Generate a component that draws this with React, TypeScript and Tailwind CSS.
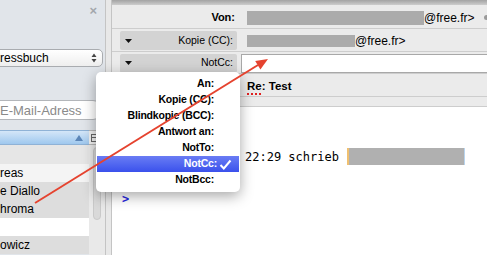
const menuItems = [
  "An:",
  "Kopie (CC):",
  "Blindkopie (BCC):",
  "Antwort an:",
  "NotTo:",
  "NotCc:",
  "NotBcc:",
];

function Sidebar() {
  return (
    <aside className="flex w-[105px] shrink-0 flex-col bg-[#e1e5ea] pt-[5px]">
      <div className="flex h-[12px] justify-end pr-[8px] text-[13px] font-bold leading-[12px] text-[#a3a7ac]">
        ×
      </div>
      {/* address book select */}
      <div className="mt-[32px] ml-[-6px] mr-[2px] flex h-[18px] items-center justify-between rounded-r-[5px] border border-[#a9acb0] bg-gradient-to-b from-white to-[#eeeeee] pl-[5px] pr-[5px] text-[12px] leading-none">
        <span>ressbuch</span>
        <svg width="6" height="10" viewBox="0 0 6 10" className="text-[#444]">
          <path d="M3 0.5 L5.5 4 H0.5 Z M3 9.5 L5.5 6 H0.5 Z" fill="currentColor" />
        </svg>
      </div>
      {/* search */}
      <div className="mt-[33px] ml-[-8px] mr-[2px] flex h-[20px] items-center rounded-r-full border border-[#b3b6ba] bg-white pl-[7px] text-[13px] leading-none text-[#8a8a8a]">
        E-Mail-Adress
      </div>
      {/* contact list */}
      <div className="mt-[10px] flex flex-1">
        <div className="flex w-[89px] flex-col">
          <div className="flex h-[15px] items-center justify-end border-y border-[#8fb2d6] bg-gradient-to-b from-[#d4e6f8] to-[#9fc8ee] pr-[6px]">
            <svg width="8" height="6" viewBox="0 0 8 6">
              <path d="M4 0 L8 6 H0 Z" fill="#5c86b8" />
            </svg>
          </div>
          <div className="h-[19px] bg-[#e6e6e6]" />
          <div className="flex h-[18px] items-center bg-[#f4f4f4] text-[12px]">reas</div>
          <div className="flex h-[18px] items-center bg-[#dddddd] text-[12px]">e Diallo</div>
          <div className="flex h-[18px] items-center bg-[#dddddd] text-[12px]">hroma</div>
          <div className="h-[18px] bg-white" />
          <div className="flex h-[18px] items-center bg-[#dddddd] text-[12px]">owicz</div>
        </div>
        <div className="flex w-[16px] flex-col bg-[#e9e9e9]">
          <div className="flex h-[15px] items-center border-y border-[#b8b8b8] bg-[#f1f1f1] pl-[2px]">
            <svg width="8" height="8" viewBox="0 0 8 8">
              <rect x="0.5" y="0.5" width="7" height="7" fill="none" stroke="#666" />
              <path d="M0.5 3.5 H7.5" stroke="#666" />
            </svg>
          </div>
          <div className="flex flex-1 justify-center pt-[2px]">
            <div className="h-[73px] w-[8px] rounded-full border border-[#c9c9c9] bg-[#d9d9d9]" />
          </div>
        </div>
      </div>
    </aside>
  );
}

function LabelButton({ text }: { text: string }) {
  return (
    <div className="ml-[8px] flex h-[19px] w-[117px] items-center justify-between rounded-[2px] bg-[#d3d3d3] pl-[5px] pr-[4px] text-[10.5px]">
      <svg width="7" height="4" viewBox="0 0 7 4">
        <path d="M0 0 H7 L3.5 4 Z" fill="#111" />
      </svg>
      <span>{text}</span>
    </div>
  );
}

function Composer() {
  return (
    <main className="flex flex-1 flex-col">
      <div className="h-[5px] bg-gradient-to-b from-[#a3a3a3] to-[#cdcdcd]" />
      <div className="flex flex-col bg-[#ebebeb]">
        <div className="flex h-[24px] items-center border-b border-[#cdcdcd] pt-[2px]">
          <div className="w-[123px] text-right text-[11px] font-bold">Von:</div>
          <div className="ml-[12px] h-[14px] w-[177px] bg-[#ababab]" />
          <span className="text-[12px]">@free.fr&gt;</span>
          <span className="ml-[9px] h-[5px] w-[5px] rounded-full bg-[#9a9a9a]" />
        </div>
        <div className="flex h-[23px] items-center border-b border-[#cdcdcd] pt-[1px]">
          <LabelButton text="Kopie (CC):" />
          <div className="ml-[10px] h-[12px] w-[108px] bg-[#ababab]" />
          <span className="text-[12px]">@free.fr&gt;</span>
        </div>
        <div className="flex h-[22px] items-center border-b border-[#cdcdcd] pt-[1px]">
          <LabelButton text="NotCc:" />
          <div className="ml-[4px] h-[19px] flex-1 border border-[#a8a8a8] bg-white" />
        </div>
        <div className="flex h-[23px] items-center border-b border-[#cdcdcd] pl-[135px] pt-[4px] text-[11.5px] font-bold">
          <span className="underline decoration-[#e02020] decoration-dotted decoration-2 underline-offset-[3px]">Re</span>
          <span>: Test</span>
        </div>
        <div className="h-[10px] border-b border-[#cdcdcd]" />
      </div>
      <div className="flex flex-1 flex-col bg-white pl-[10px] font-['DejaVu_Sans_Mono',monospace] text-[12px]">
        <div className="mt-[42px] flex h-[15px] items-center whitespace-nowrap pl-[123px]">
          <span>22:29 schrieb</span>
          <span className="ml-[8px] h-[17px] w-[118px] border-l-2 border-r border-l-[#f0c070] border-r-[#b8d4ee] bg-[#b0b0b0]" />
        </div>
        <div className="mt-[28px] h-[15px] font-bold leading-[15px] text-[#2626e0]">&gt;</div>
      </div>
    </main>
  );
}

function AddressMenu() {
  return (
    <div className="absolute left-[96px] top-[72px] w-[144px] rounded-[5px] bg-white py-[4px] shadow-[0_4px_14px_rgba(0,0,0,0.35)]">
      {menuItems.map((item) =>
        item === "NotCc:" ? (
          <div
            key={item}
            className="mx-[1px] flex h-[16px] items-center justify-end bg-gradient-to-b from-[#6a7cf4] to-[#3b50ec] pr-[7px] text-[10.5px] font-bold tracking-[-0.2px] text-white"
          >
            <span>{item}</span>
            <svg width="13" height="11" viewBox="0 0 13 11" className="ml-[2px]">
              <path d="M1.5 6 L4.8 9.5 L11.5 1.5" fill="none" stroke="white" strokeWidth="2" />
            </svg>
          </div>
        ) : (
          <div
            key={item}
            className="flex h-[16px] items-center justify-end pr-[26px] text-[10.5px] font-bold tracking-[-0.2px]"
          >
            {item}
          </div>
        )
      )}
    </div>
  );
}

function Arrow() {
  return (
    <svg className="pointer-events-none absolute left-0 top-0" width="487" height="255">
      <line x1="35" y1="203" x2="258" y2="65" stroke="#e5432f" strokeWidth="2" />
      <polygon points="268,59 260.4,69.6 255.2,61.1" fill="#e5432f" />
    </svg>
  );
}

export default function App() {
  return (
    <div className="relative flex h-[255px] w-[487px] overflow-hidden bg-white font-['Liberation_Sans',Arial,sans-serif] text-black">
      <Sidebar />
      <div className="w-[7px] shrink-0 border-x border-x-[#c4c4c4] bg-[#e8e8e8]" />
      <Composer />
      <AddressMenu />
      <Arrow />
    </div>
  );
}
